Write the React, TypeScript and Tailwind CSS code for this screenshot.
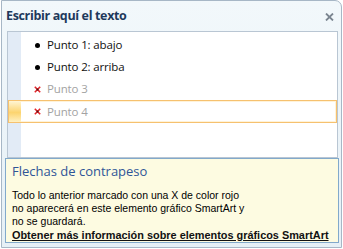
import React from "react";

const items = [
  { label: "Punto 1: abajo", removed: false },
  { label: "Punto 2: arriba", removed: false },
  { label: "Punto 3", removed: true },
  { label: "Punto 4", removed: true, selected: true },
];

function RedX() {
  return (
    <svg width="7" height="7" viewBox="0 0 7 7">
      <path d="M0.8 0.8 L6.2 6.2 M6.2 0.8 L0.8 6.2" stroke="#e4262b" strokeWidth="1.6" />
      <rect x="2.5" y="2.5" width="2" height="2" fill="#5a1010" />
    </svg>
  );
}

function App() {
  return (
    <div className="w-[343px] h-[249px] bg-white overflow-hidden">
      <div className="ml-[1px] w-[341px] h-[248px] border border-[#a7b7c6] rounded-tr-[7px] bg-[linear-gradient(to_bottom,#f2f8fb,#e6f0f6)] flex flex-col">
        {/* Title */}
        <div className="h-[30px] flex items-center justify-between pl-[4px] pr-[7px]">
          <span className="font-['Open_Sans',sans-serif] font-bold text-[12.5px] text-[#1e395b] tracking-[-0.35px]">
            Escribir aquí el texto
          </span>
          <svg width="9" height="8" viewBox="0 0 9 8" className="mt-[2px]">
            <path d="M1 0.5 L8 7.5 M8 0.5 L1 7.5" stroke="#7b8590" strokeWidth="1.8" />
          </svg>
        </div>

        {/* Text pane */}
        <div className="ml-[5px] w-[331px] h-[127px] border border-[#b9c6d3] bg-[linear-gradient(to_right,#e2ebf6_13px,#ffffff_13px)] pt-[2px]">
          {items.map((it) => (
            <div
              key={it.label}
              className={
                it.selected
                  ? "h-[23px] flex items-center border border-[#f6c16f] shadow-[inset_0_0_0_1px_#fff3d9] bg-[linear-gradient(to_right,transparent_13px,#ffffff_13px)]"
                  : "h-[22px] flex items-center"
              }
            >
              {it.selected ? (
                <div className="w-[12px] h-full bg-[linear-gradient(to_bottom,#fff5d4,#fcd46f_55%,#fff0c0)]" />
              ) : (
                <div className="w-[13px]" />
              )}
              <div className="w-[11px]" />
              <div className="w-[10px] flex items-center justify-center">
                {it.removed ? (
                  <RedX />
                ) : (
                  <div className="w-[5px] h-[5px] rounded-full bg-black" />
                )}
              </div>
              <span
                className={
                  "ml-[5px] font-['Open_Sans',sans-serif] text-[11.5px] tracking-[-0.15px] " +
                  (it.removed ? "text-[#a3a3a3]" : "text-[#111111]")
                }
              >
                {it.label}
              </span>
            </div>
          ))}
        </div>

        {/* Info pane */}
        <div className="ml-[3px] w-[334px] h-[85px] border border-[#82a9cb] bg-[#fdfbe1] px-[6px] pt-[3px]">
          <div className="font-['Open_Sans',sans-serif] text-[13px] text-[#2f5597] leading-[18px]">
            Flechas de contrapeso
          </div>
          <div className="mt-[9px] font-['Liberation_Sans',sans-serif] text-[10.5px] leading-[13px] text-black">
            <div>Todo lo anterior marcado con una X de color rojo</div>
            <div>no aparecerá en este elemento gráfico SmartArt y</div>
            <div>no se guardará.</div>
          </div>
          <div className="font-['Liberation_Sans',sans-serif] text-[10.9px] font-bold underline leading-[14px] text-[#111]">
            Obtener más información sobre elementos gráficos SmartArt
          </div>
        </div>
      </div>
    </div>
  );
}

export default App;
